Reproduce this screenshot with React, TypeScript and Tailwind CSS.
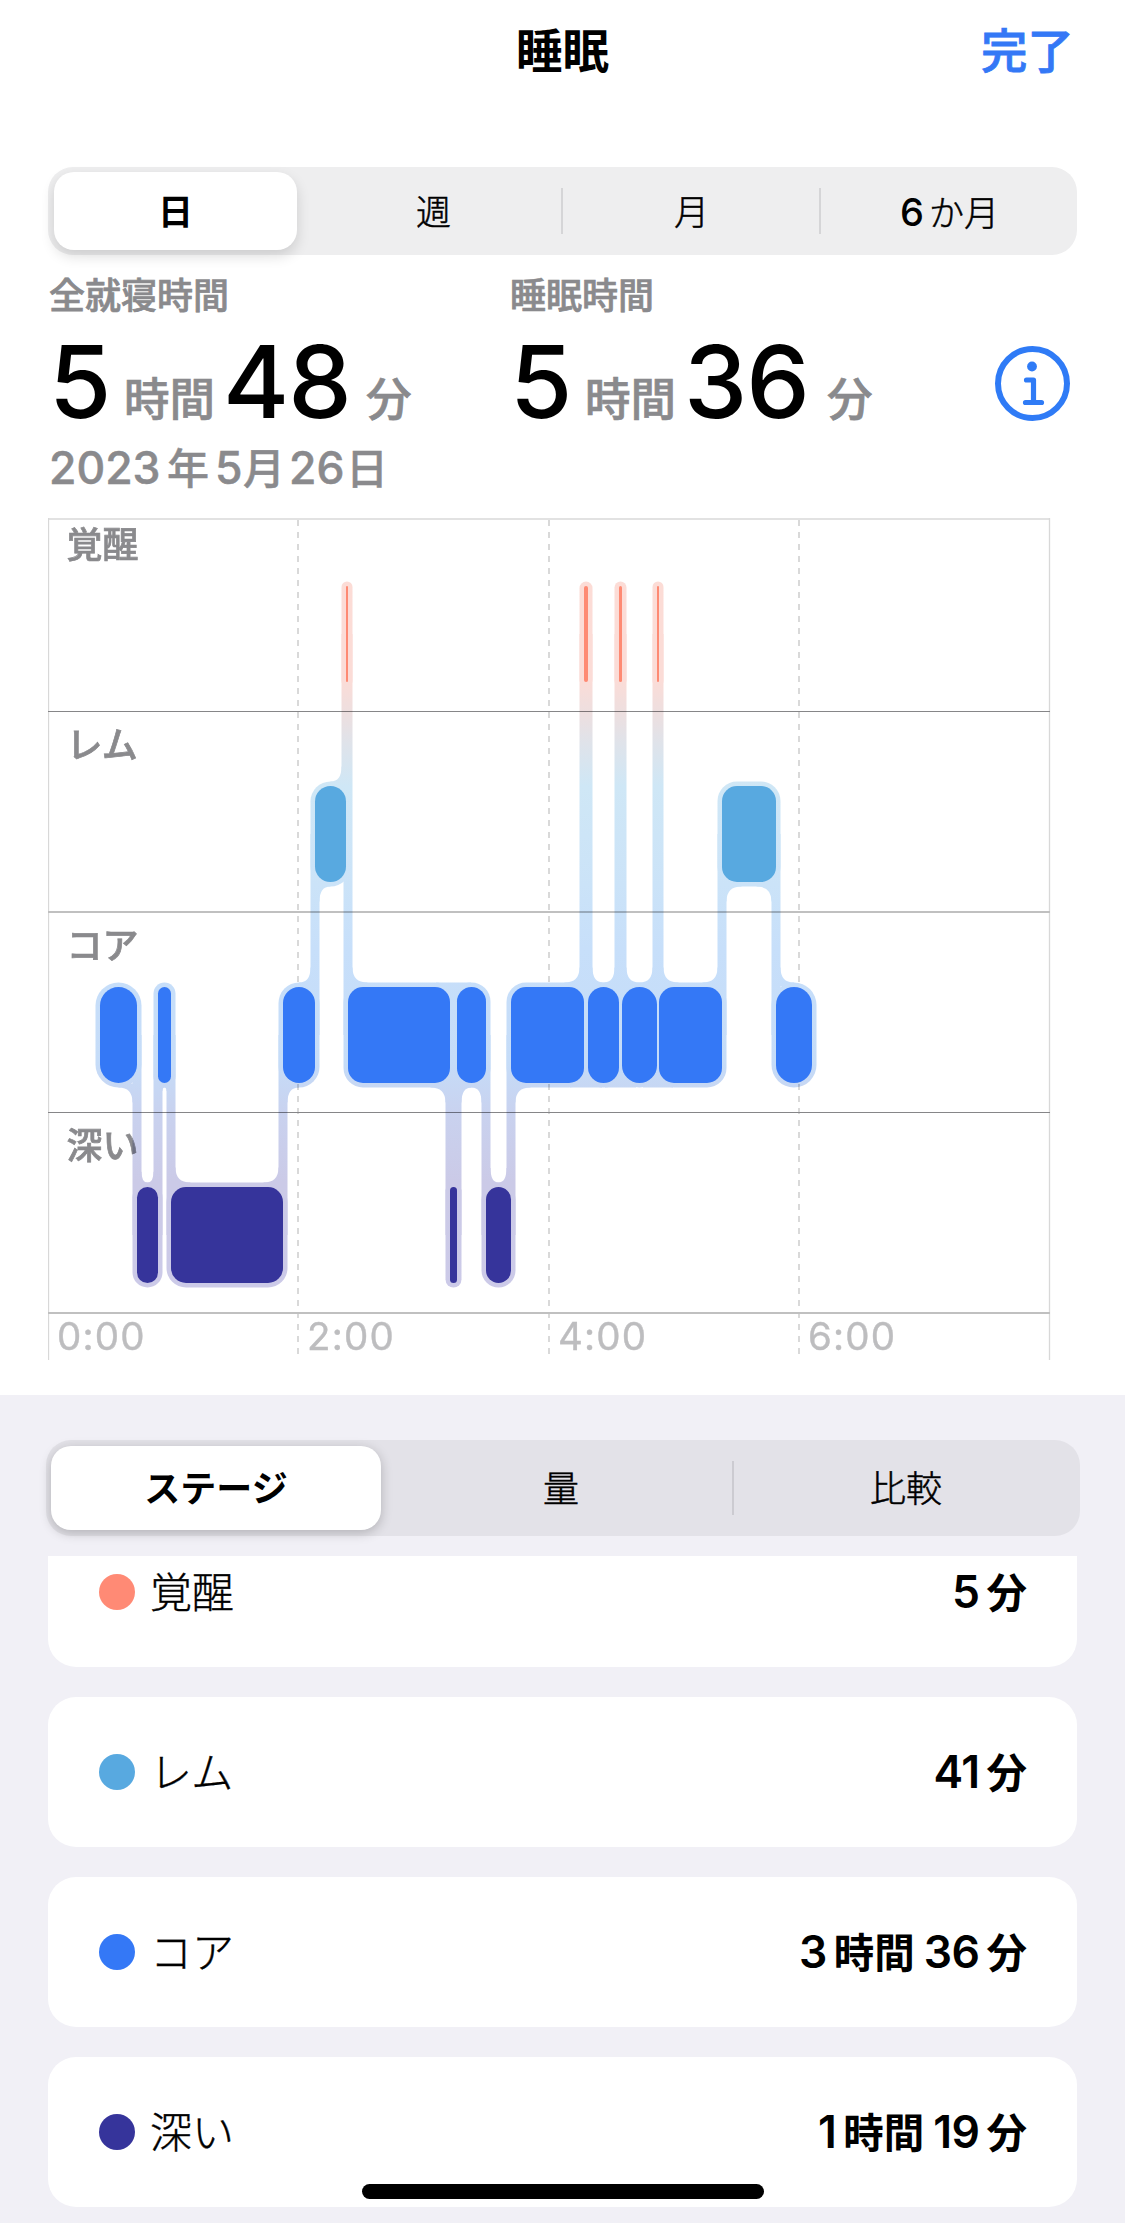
import { useState } from 'react';

type Level = 'awake' | 'rem' | 'core' | 'deep';

interface Segment {
  level: Level;
  start: number;
  end: number;
}

// vertical extent of each stage row inside the chart
const BAR_HEIGHT = 96;
const ROW_TOP: Record<Level, number> = { awake: 68, rem: 268, core: 469, deep: 669 };
const COLORS: Record<Level, string> = {
  awake: '#fe8a73',
  rem: '#58a9e0',
  core: '#3478f6',
  deep: '#36349b',
};

const PAD = 4.5;
const FILLET = 15;

const segments: Segment[] = [
  { level: 'core', start: 52, end: 89 },
  { level: 'deep', start: 89, end: 110 },
  { level: 'core', start: 110, end: 123 },
  { level: 'deep', start: 123, end: 235 },
  { level: 'core', start: 235, end: 267 },
  { level: 'rem', start: 267, end: 298 },
  { level: 'awake', start: 298, end: 300 },
  { level: 'core', start: 300, end: 402 },
  { level: 'deep', start: 402, end: 409 },
  { level: 'core', start: 409, end: 438 },
  { level: 'deep', start: 438, end: 463 },
  { level: 'core', start: 463, end: 536 },
  { level: 'awake', start: 536, end: 540 },
  { level: 'core', start: 540, end: 571 },
  { level: 'awake', start: 571, end: 574 },
  { level: 'core', start: 574, end: 609 },
  { level: 'awake', start: 609, end: 611 },
  { level: 'core', start: 611, end: 674 },
  { level: 'rem', start: 674, end: 728 },
  { level: 'core', start: 728, end: 764 },
];

// narrow bars are full pills
const radius = (s: Segment) => {
  const width = s.end - s.start;
  return width < 40 ? width / 2 : 15;
};

// Curved corner where a connector leaves a bar
const fillet = (s: Segment, x: number, side: -1 | 1, goesDown: boolean) => {
  const rx = Math.max(0, Math.min(FILLET, (s.end - s.start) / 2 - PAD));
  if (rx < 1) return null;
  const ry = Math.min(FILLET, rx * 1.8);
  const dir = goesDown ? 1 : -1;
  const edgeX = x + side * PAD;
  const edgeY = goesDown ? ROW_TOP[s.level] + BAR_HEIGHT + PAD : ROW_TOP[s.level] - PAD;
  return `M${edgeX - side} ${edgeY - dir * 4} L${edgeX + side * rx} ${edgeY - dir * 4} V${edgeY} Q${edgeX} ${edgeY} ${edgeX} ${edgeY + dir * ry} H${edgeX - side} Z`;
};

const Halo = () => (
  <g fill="url(#stages)" className="mix-blend-multiply">
    {segments.map((s, i) => (
      <rect
        key={i}
        x={s.start - PAD}
        y={ROW_TOP[s.level] - PAD}
        width={s.end - s.start + PAD * 2}
        height={BAR_HEIGHT + PAD * 2}
        rx={radius(s) + PAD}
      />
    ))}
    {segments.slice(1).map((b, i) => {
      const a = segments[i];
      const x = b.start;
      const down = ROW_TOP[b.level] > ROW_TOP[a.level];
      const top = Math.min(ROW_TOP[a.level], ROW_TOP[b.level]) + BAR_HEIGHT / 2;
      const bottom = Math.max(ROW_TOP[a.level], ROW_TOP[b.level]) + BAR_HEIGHT / 2;
      const before = fillet(a, x, -1, down);
      const after = fillet(b, x, 1, !down);
      return (
        <g key={i}>
          <rect x={x - PAD} y={top} width={PAD * 2} height={bottom - top} />
          {before && <path d={before} />}
          {after && <path d={after} />}
        </g>
      );
    })}
    {/* short interruptions do not split the outline of a row */}
    {segments.slice(2).map((c, i) => {
      const a = segments[i];
      if (a.level !== c.level || c.start - a.end > 8) return null;
      return (
        <rect
          key={i}
          x={a.end - 14}
          y={ROW_TOP[a.level] - PAD}
          width={c.start - a.end + 28}
          height={BAR_HEIGHT + PAD * 2}
        />
      );
    })}
  </g>
);

const SleepChart = () => (
  <svg width="1003" height="844" viewBox="0 0 1003 844" className="block isolate">
    <defs>
      <linearGradient id="stages" gradientUnits="userSpaceOnUse" x1="0" y1="63" x2="0" y2="770">
        <stop offset="0" stopColor="#fcdcd6" />
        <stop offset="0.14" stopColor="#fbdcd7" />
        <stop offset="0.19" stopColor="#ecdfe0" />
        <stop offset="0.23" stopColor="#dfe3ea" />
        <stop offset="0.29" stopColor="#cfe7f6" />
        <stop offset="0.43" stopColor="#cbe3f8" />
        <stop offset="0.52" stopColor="#c7dffa" />
        <stop offset="0.68" stopColor="#c5dcf8" />
        <stop offset="0.76" stopColor="#c9d1ee" />
        <stop offset="0.85" stopColor="#cbcae7" />
        <stop offset="1" stopColor="#cccae8" />
      </linearGradient>
    </defs>

    <rect width="1003" height="844" fill="#fff" />

    <path d="M0 1H1002" stroke="#e2e2e2" strokeWidth="2" />
    <path d="M0.5 0V842 M1001.5 0V842" stroke="#d8d8d8" strokeWidth="1.3" />
    <path d="M250 2V836 M501 2V836 M751 2V836" stroke="#c9c9c9" strokeWidth="1.4" strokeDasharray="6 6" />
    <path d="M0 193.5H1002 M0 594.5H1002" stroke="#868688" strokeWidth="1" />
    <path d="M0 394H1002 M0 795H1002" stroke="#c0c0c0" strokeWidth="2" />

    <g
      fill="#8a8a8d"
      stroke="#8a8a8d"
      strokeWidth="0.7"
      fontSize="36"
      fontWeight="500"
      fontFamily="'Noto Sans CJK JP', sans-serif"
    >
      <text x="18.5" y="40">覚醒</text>
      <text x="18.5" y="240">レム</text>
      <text x="18.5" y="441">コア</text>
      <text x="18.5" y="641">深い</text>
    </g>
    <g fill="#bdbdbf" stroke="#bdbdbf" strokeWidth="0.4" fontSize="38.5" letterSpacing="1.2" fontFamily="Inter, sans-serif">
      <text x="9" y="831.5">0:00</text>
      <text x="259" y="831.5">2:00</text>
      <text x="510" y="831.5">4:00</text>
      <text x="760" y="831.5">6:00</text>
    </g>

    <Halo />
    {segments.map((s, i) => (
      <rect
        key={i}
        x={s.start}
        y={ROW_TOP[s.level]}
        width={s.end - s.start}
        height={BAR_HEIGHT}
        rx={radius(s)}
        fill={COLORS[s.level]}
      />
    ))}
  </svg>
);

const InfoIcon = () => (
  <svg width="76" height="76" viewBox="0 0 76 76" fill="none" stroke="#2f7bf6" className="block">
    <circle cx="37.5" cy="37.5" r="34.5" strokeWidth="6" />
    <circle cx="37" cy="20.5" r="4.9" fill="#2f7bf6" stroke="none" />
    <path d="M31.5 34H38.5V56 M30.5 56.5H46.5" strokeWidth="5.2" strokeLinecap="round" strokeLinejoin="round" />
  </svg>
);

interface DurationProps {
  label: string;
  hours: string;
  minutes: string;
}

const Duration = ({ label, hours, minutes }: DurationProps) => (
  <div className="w-[461px]">
    <div className="h-[50px] text-[36px] leading-[52px] font-medium text-[#8a8a8d] [-webkit-text-stroke:0.7px_#8a8a8d]">
      {label}
    </div>
    <div className="flex h-[122px] items-baseline whitespace-nowrap leading-[122px]">
      <span className="w-[75px] text-[101px] font-medium">{hours}</span>
      <span className="relative -top-[2px] w-[99px] text-[45.5px] font-medium text-[#8a8a8d] [-webkit-text-stroke:0.7px_#8a8a8d]">
        時間
      </span>
      <span className="w-[143px] text-[101px] font-medium tracking-[-1px]">{minutes}</span>
      <span className="relative -top-[2px] text-[45.5px] font-medium text-[#8a8a8d] [-webkit-text-stroke:0.7px_#8a8a8d]">
        分
      </span>
    </div>
  </div>
);

const stages = [
  { name: '覚醒', color: 'bg-[#ff8a75]', value: [['5', '分']] },
  { name: 'レム', color: 'bg-[#58a9e0]', value: [['41', '分']] },
  { name: 'コア', color: 'bg-[#3478f6]', value: [['3', '時間'], ['36', '分']] },
  { name: '深い', color: 'bg-[#36349b]', value: [['1', '時間'], ['19', '分']] },
];

export default function App() {
  const [range, setRange] = useState(0);
  const [view, setView] = useState(0);

  return (
    <div className="relative h-[2223px] w-[1125px] overflow-hidden bg-white font-['Inter','Noto_Sans_CJK_JP',sans-serif] text-black">
      <header className="grid h-[167px] grid-cols-3 pt-[16px] text-[46.5px] leading-[71px]">
        <h1 className="col-start-2 text-center font-bold">睡眠</h1>
        <button className="h-[71px] pr-[51px] text-right font-medium text-[#3478f6] [-webkit-text-stroke:0.8px_#3478f6]">
          完了
        </button>
      </header>

      <div className="mx-12 flex h-[88px] w-[1029px] rounded-[25px] bg-[#eeeeef] px-[6px] py-[5px] text-[35px]">
        {['日', '週', '月', '6か月'].map((label, i) => (
          <div key={label} className="flex w-[258px] shrink-0 items-center">
            <button
              onClick={() => setRange(i)}
              className={`h-[78px] w-[243px] rounded-[20px] pt-[2px] ${
                range === i
                  ? 'bg-white font-bold shadow-[0_6px_14px_rgba(0,0,0,0.14)]'
                  : 'font-light [-webkit-text-stroke:0.5px_black]'
              }`}
            >
              {i === 3 ? (
                <>
                  <span className="mr-[5px] text-[38px] font-medium [-webkit-text-stroke:0px]">6</span>か月
                </>
              ) : (
                label
              )}
            </button>
            {(i === 1 || i === 2) && <div className="ml-[6px] h-[46px] w-[2px] bg-[#d5d5d7]" />}
          </div>
        ))}
      </div>

      <div className="flex h-[187px] pt-[15px] pl-[49px]">
        <Duration label="全就寝時間" hours="5" minutes="48" />
        <Duration label="睡眠時間" hours="5" minutes="36" />
        <button className="mt-[76px] ml-[24px] h-[76px]">
          <InfoIcon />
        </button>
      </div>
      <div className="ml-[49px] flex h-[58px] items-baseline text-[42px] leading-[53px] font-medium whitespace-nowrap text-[#8a8a8d] [-webkit-text-stroke:0.5px_#8a8a8d]">
        <span className="w-[118px] text-[44.5px]">2023</span>
        <span className="w-[48px]">年</span>
        <span className="w-[28px] text-[44.5px]">5</span>
        <span className="w-[46px]">月</span>
        <span className="w-[57px] text-[44.5px]">26</span>
        <span>日</span>
      </div>

      <div className="mt-[18px] ml-12 h-[877px]">
        <SleepChart />
      </div>

      <section className="h-[828px] bg-[#f1f0f6] pt-[45px]">
        <div className="ml-[46px] flex h-[96px] w-[1034px] items-center rounded-[25px] bg-[#e3e2e8] px-[5px] text-[36px]">
          {['ステージ', '量', '比較'].map((label, i) => (
            <div key={label} className="flex w-[345px] shrink-0 items-center">
              <button
                onClick={() => setView(i)}
                className={`h-[84px] w-[330px] rounded-[20px] pt-[2px] ${
                  view === i
                    ? 'bg-white font-bold shadow-[0_3px_12px_rgba(0,0,0,0.22)]'
                    : 'font-light [-webkit-text-stroke:0.5px_black]'
                }`}
              >
                {label}
              </button>
              {i === 1 && <div className="ml-[6px] h-[54px] w-[2px] bg-[#cccbd1]" />}
            </div>
          ))}
        </div>

        <div className="mt-5 flex h-[667px] flex-col justify-end gap-[30px] overflow-hidden px-12 pb-4">
          {stages.map((stage) => (
            <div
              key={stage.name}
              className="flex h-[150px] shrink-0 items-center rounded-[28px] bg-white pr-[50px] pl-[51px] text-[42px]"
            >
              <span className={`size-[36px] rounded-full ${stage.color}`} />
              <span className="ml-[15px] font-light [-webkit-text-stroke:0.4px_black]">{stage.name}</span>
              <div className="ml-auto flex items-baseline gap-[9px] font-bold">
                {stage.value.map(([amount, unit]) => (
                  <span key={unit} className="flex items-baseline gap-[7px] text-[40.5px]">
                    <span className="text-[44.5px] font-semibold tracking-[-0.5px]">{amount}</span>
                    {unit}
                  </span>
                ))}
              </div>
            </div>
          ))}
        </div>
      </section>

      {/* home indicator */}
      <div className="absolute top-[2184px] left-[362px] h-[15px] w-[402px] rounded-full bg-black" />
    </div>
  );
}
